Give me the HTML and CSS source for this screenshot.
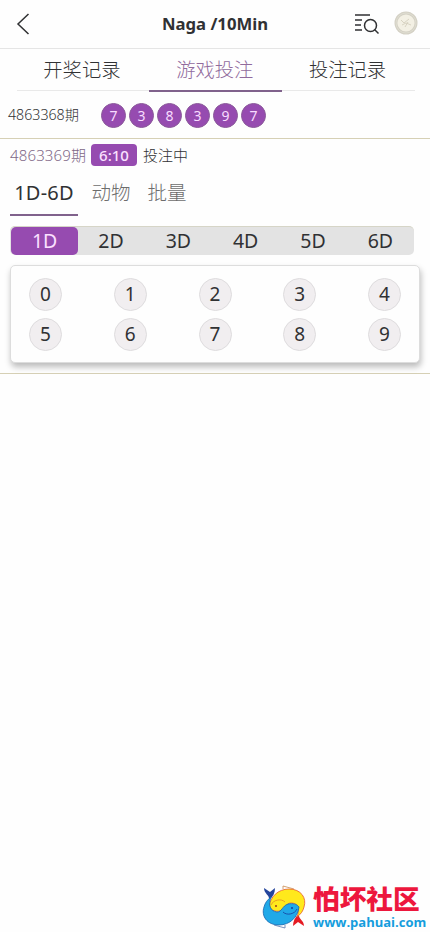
FILE: index.html
```html
<!DOCTYPE html>
<html lang="zh-CN">
<head>
<meta charset="utf-8">
<title>Naga /10Min</title>
<link rel="stylesheet" href="styles.css">
</head>
<body>
<header class="header">
  <svg class="back" width="14" height="24" viewBox="0 0 14 24"><path d="M12.500 2L2 12L12.500 22"/></svg>
  <h1 class="title">Naga /10Min</h1>
  <div class="actions">
    <svg class="search" width="26" height="22" viewBox="0 0 26 22"><path d="M1 2H16M1 7H8M1 12H7M1 17H8M20.500 16.500L24.500 20.500"/><circle cx="16.500" cy="12.500" r="6"/></svg>
    <svg class="coin" width="24" height="24" viewBox="0 0 24 24"><circle cx="12" cy="12" r="11.500" fill="#d4d1c5"/><circle cx="12" cy="12" r="8.600" fill="#f3f0e4"/><circle cx="12" cy="12" r="10" fill="none" stroke="#dfddd1"/><path d="M7 9l3 3 5-4M8 14l4-2 5 2M11 16l3-5" fill="none" stroke="#d1ccb9" stroke-width=".8"/></svg>
  </div>
</header>
<nav class="tabs">
  <a class="tab">开奖记录</a>
  <a class="tab active">游戏投注</a>
  <a class="tab">投注记录</a>
</nav>
<section class="result">
  <span class="issue">4863368期</span>
  <div class="balls"><span>7</span><span>3</span><span>8</span><span>3</span><span>9</span><span>7</span></div>
</section>
<main class="bet">
  <div class="current"><span class="number">4863369期</span><span class="timer">6:10</span><span>投注中</span></div>
  <nav class="modes"><a class="mode selected">1D-6D</a><a class="mode">动物</a><a class="mode">批量</a></nav>
  <div class="segments"><span class="on">1D</span><span>2D</span><span>3D</span><span>4D</span><span>5D</span><span>6D</span></div>
  <div class="card">
    <button>0</button><button>1</button><button>2</button><button>3</button><button>4</button>
    <button>5</button><button>6</button><button>7</button><button>8</button><button>9</button>
  </div>
</main>
<footer class="brand">
  <svg class="fish" width="46" height="46" viewBox="0 0 46 46">
    <path d="M8 15C9 10 3 9 3 3L9 7L14 3C14 8 12 12 8 15Z" fill="#24459c"/>
    <path d="M38 29C37 34 43 35 43 41L37 37L32 41C32 36 34 32 38 29Z" fill="#e51b23"/>
    <path d="M22 4V1L33 4" fill="none" stroke="#c98a50" stroke-width=".8"/>
    <path d="M24 40V43L13 40" fill="none" stroke="#5b78ad" stroke-width=".8"/>
    <path d="M8 22C9 12 17 4 28 4C40 4 46 13 43 22C42 26 40 29 36 32C39 24 37 18 30 18C25 18 25 24 19 26C14 27 10 25 8 22Z" fill="#ffe91c" stroke="#e4582f" stroke-width=".8"/>
    <path d="M38 22C37 32 29 40 18 40C6 40 0 31 3 22C4 18 6 15 10 12C7 20 9 26 16 27C21 27 21 21 27 19C32 18 36 19 38 22Z" fill="#20a9e8" stroke="#1765ad" stroke-width=".8"/>
    <path d="M10 20C12 15 20 13 24 17" fill="none" stroke="#e48b20" stroke-width=".8"/>
    <path d="M36 24C34 29 26 31 22 27" fill="none" stroke="#173c9c" stroke-width=".8"/>
    <circle cx="15" cy="21" r="1" fill="#a13a20"/><circle cx="31" cy="23" r="1" fill="#173c9c"/>
  </svg>
  <div class="brand-text"><span class="brand-name">怕坏社区</span><span class="brand-url">www.pahuai.com</span></div>
</footer>
</body>
</html>
```
FILE: styles.css
```css
* { box-sizing: border-box; }
body {
  margin: 0;
  min-height: 932px;
  display: flex;
  flex-direction: column;
  background: #fefefe;
  color: #303133;
  font-family: "Noto Sans", "Noto Sans CJK SC", sans-serif;
}
.header {
  height: 49px;
  display: grid;
  grid-template-columns: 80px 1fr 80px;
  align-items: center;
  border-bottom: 1px solid #e5e5e5;
}
.back { margin-left: 16px; fill: none; stroke: #303133; stroke-width: 1.5; }
.title { margin: 0; text-align: center; font-size: 16.700px; font-weight: 700; line-height: 24px; }
.actions { display: flex; align-items: center; gap: 14px; margin-left: 4px; }
.search { fill: none; stroke: #303133; stroke-width: 1.5; flex: none; }
.coin { flex: none; margin-top: -2px; }
.tabs { display: flex; height: 43px; padding: 0 15px 0 16.500px; }
.tab {
  flex: 1;
  height: 42px;
  padding-right: 2px;
  text-align: center;
  font-size: 19.300px;
  font-weight: 300;
  font-family: "Noto Sans CJK SC", sans-serif;
  line-height: 40px;
  border-bottom: 1px solid #e9e9e9;
}
.tab.active { height: 43px; color: #916b9d; border-bottom: 2px solid #80628c; }
.result { height: 47px; display: flex; align-items: center; padding-left: 8px; border-bottom: 1px solid #d6d0b5; }
.issue { width: 93px; font-size: 14.200px; font-weight: 300; line-height: 20px; }
.balls { display: flex; gap: 3px; }
.balls span {
  width: 25px; height: 25px; border-radius: 50%;
  background: #964bb0; border: 1px solid #8b5a9a; color: #f8dcff;
  font-size: 14px; line-height: 23px; text-align: center;
}
.bet { height: 235px; padding: 5px 10px 0; border-bottom: 1px solid #d6d0b5; }
.current { display: flex; align-items: center; height: 22px; font-size: 15px; line-height: 22px; font-weight: 300; }
.number { width: 81px; color: #806787; letter-spacing: .15px; }
.timer {
  width: 46px; margin-right: 6px; border-radius: 4px; text-align: center;
  background: #964bb0; color: #fbe1ff; font-weight: 500;
}
.modes { display: flex; height: 50px; font-size: 19.500px; line-height: 54px; }
.mode { width: 56px; text-align: center; color: #6d6d6d; font-weight: 300; }
.mode.selected { width: 68px; margin-right: 5px; color: #303133; font-size: 20px; font-weight: 400; letter-spacing: .2px; border-bottom: 2px solid #80628c; }
.segments {
  width: 404px; height: 29px; margin-top: 10px; display: grid;
  grid-template-columns: repeat(6, 1fr); border-radius: 5px;
  background: #e3e3e3; border-top: 1px solid #d6d5c7;
  font-size: 19.500px; line-height: 28px; text-align: center;
}
.segments .on { margin-left: 1px; margin-right: -1px; color: #fbe0ff; background: #964bb0; border-radius: 5px; }
.card {
  height: 98px; margin: 10px 0 0; padding: 12px 18px;
  display: grid; grid-template-columns: repeat(5, 33px); justify-content: space-between;
  grid-template-rows: 33px 33px; row-gap: 7px;
  border: 1px solid #ddd; border-radius: 5px; background: #fefefe;
  box-shadow: 1px 4px 6px #bbb;
}
.card button {
  width: 33px; height: 33px; padding: 0; border: 1px solid #dedcde; border-radius: 50%;
  background: #f1eef0; color: #303133; font-family: inherit; font-size: 19px; line-height: 29px;
}
.brand { display: flex; gap: 6px; margin-top: auto; align-self: flex-end; height: 47px; width: 169px; }
.fish { flex: none; }
.brand-text { display: flex; flex-direction: column; white-space: nowrap; }
.brand-name { height: 30px; font: 900 26.700px/26px "Noto Sans CJK SC", sans-serif; color: #ed173d; }
.brand-url { font: 700 13px/14px "Open Sans", sans-serif; color: #159ddd; }
```
